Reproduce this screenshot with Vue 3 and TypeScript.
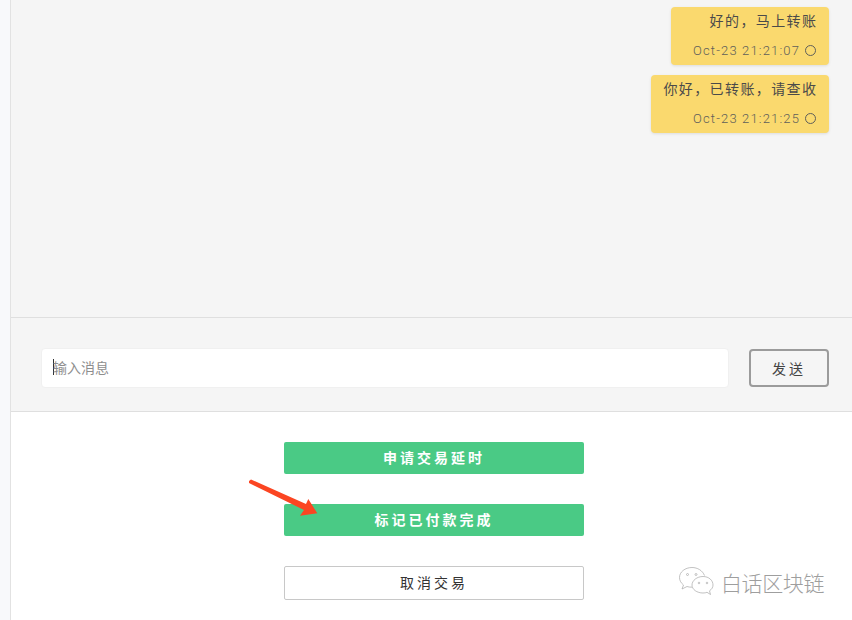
<script setup lang="ts">
interface Message { text: string; time: string }
const messages: Message[] = [
  { text: '好的，马上转账', time: 'Oct-23 21:21:07' },
  { text: '你好，已转账，请查收', time: 'Oct-23 21:21:25' },
]
</script>

<template>
  <div class="page">
    <aside class="rail"></aside>
    <main class="main">
      <section class="chat">
        <div v-for="m in messages" :key="m.time" class="bubble">
          <div class="text">{{ m.text }}</div>
          <div class="meta">
            <span>{{ m.time }}</span>
            <i class="status"></i>
          </div>
        </div>
      </section>
      <section class="composer">
        <div class="input"><i class="caret"></i><span>输入消息</span></div>
        <button class="send">发送</button>
      </section>
      <section class="actions">
        <button class="btn primary">申请交易延时</button>
        <button class="btn primary">标记已付款完成</button>
        <button class="btn outline">取消交易</button>
      </section>
    </main>

    <svg class="arrow" width="72" height="44" viewBox="0 0 72 44">
      <path d="M1 2 L3 0.500 L58 25 L60.300 20 L69.300 34.300 L52 36.700 L56 31 L1 4 Z" fill="#fb4522" />
    </svg>

    <div class="mark">
      <svg width="36" height="32" viewBox="0 0 36 32" fill="none" stroke="#a8a8a8" stroke-width="0.7">
        <path d="M14 1.500 C7 1.500 1.500 6 1.500 11.500 C1.500 14.500 3 17 5.500 19 L4 23 L9 20.500 C10.500 21 12 21.200 14 21.200" />
        <path d="M26.500 9.500 C24.500 4.500 19.500 1.500 14 1.500" />
        <path d="M25 10.500 C19 10.500 14 14.500 14 19 C14 23.500 19 27 25 27 C26.500 27 28 26.800 29 26.300 L32.500 28.500 L31.500 24.800 C33.800 23.300 35 21.300 35 19 C35 14.500 31 10.500 25 10.500 Z" />
        <circle cx="9.500" cy="8.500" r="1" />
        <circle cx="18" cy="8.500" r="1" />
        <circle cx="21" cy="17" r="0.800" />
        <circle cx="29" cy="17" r="0.800" />
      </svg>
      <span>白话区块链</span>
    </div>
  </div>
</template>

<style>
html, body { margin: 0; background: #fff; }
</style>

<style scoped>
.page {
  position: relative;
  width: 852px;
  height: 620px;
  overflow: hidden;
  display: flex;
  font-family: "Noto Sans CJK SC", "Liberation Sans", sans-serif;
}
.rail {
  width: 10px;
  flex: none;
  background: #f8f9fb;
  border-right: 1px solid #e2e2e2;
}
.main {
  flex: 1;
  display: flex;
  flex-direction: column;
  min-width: 0;
}
.chat {
  height: 317px;
  box-sizing: border-box;
  padding: 7px 23px 0 0;
  background: #f5f5f5;
  display: flex;
  flex-direction: column;
  align-items: flex-end;
  gap: 10px;
}
.bubble {
  box-sizing: border-box;
  min-width: 158px;
  height: 58px;
  padding: 3px 13px 0 12px;
  background: #fad96e;
  border-radius: 4px;
  box-shadow: 0 1px 3px rgba(0, 0, 0, 0.1);
  text-align: right;
}
.text {
  font-size: 14px;
  line-height: 20px;
  letter-spacing: 1.400px;
  color: #4a4a4a;
  margin-right: -1.400px;
}
.meta {
  margin-top: 10px;
  height: 20px;
  display: flex;
  align-items: center;
  justify-content: flex-end;
  gap: 5px;
  font-family: Roboto, "Liberation Sans", sans-serif;
  font-size: 13px;
  font-weight: 300;
  letter-spacing: 1.150px;
  color: #5f5f5a;
}
.status {
  width: 9px;
  height: 9px;
  border: 1px solid #5f5f5a;
  border-radius: 50%;
}
.composer {
  height: 95px;
  box-sizing: border-box;
  border-top: 1px solid #dfdfdf;
  border-bottom: 1px solid #dfdfdf;
  background: #f5f5f5;
  padding: 30px 23px 0 30px;
  display: flex;
  align-items: flex-start;
  gap: 20px;
}
.input {
  flex: 1;
  height: 40px;
  box-sizing: border-box;
  display: flex;
  align-items: center;
  padding: 0 0 2px 11px;
  background: #fff;
  border: 1px solid #f0f0f0;
  border-radius: 4px;
  font-size: 14px;
  color: #8e8e8e;
}
.caret {
  width: 1px;
  height: 16px;
  margin-right: -1px;
  background: #333;
}
.send {
  width: 80px;
  height: 38px;
  margin-top: 1px;
  box-sizing: border-box;
  padding: 0;
  background: #f5f5f5;
  border: 2px solid #9b9b9b;
  border-radius: 4px;
  font: 14px "Noto Sans CJK SC", sans-serif;
  letter-spacing: 3px;
  color: #444;
}
.actions {
  flex: 1;
  background: #fff;
  padding: 30px 0 0 5px;
  display: flex;
  flex-direction: column;
  align-items: center;
}
.btn {
  width: 300px;
  height: 32px;
  padding: 0 0 2px;
  border-radius: 2px;
  border: 0;
  font: 14px "Noto Sans CJK SC", sans-serif;
  letter-spacing: 3px;
}
.primary {
  background: #4aca85;
  color: #fff;
  font-weight: 700;
  margin-bottom: 30px;
}
.outline {
  height: 34px;
  background: #fff;
  border: 1px solid #c8c8c8;
  color: #333;
}
.arrow {
  position: absolute;
  left: 248px;
  top: 479px;
}
.mark {
  position: absolute;
  left: 678px;
  top: 566px;
  display: flex;
  align-items: center;
  gap: 7px;
  color: #9e9e9e;
  font-size: 21px;
  font-weight: 300;
  letter-spacing: -0.400px;
  line-height: 32px;
}
</style>
